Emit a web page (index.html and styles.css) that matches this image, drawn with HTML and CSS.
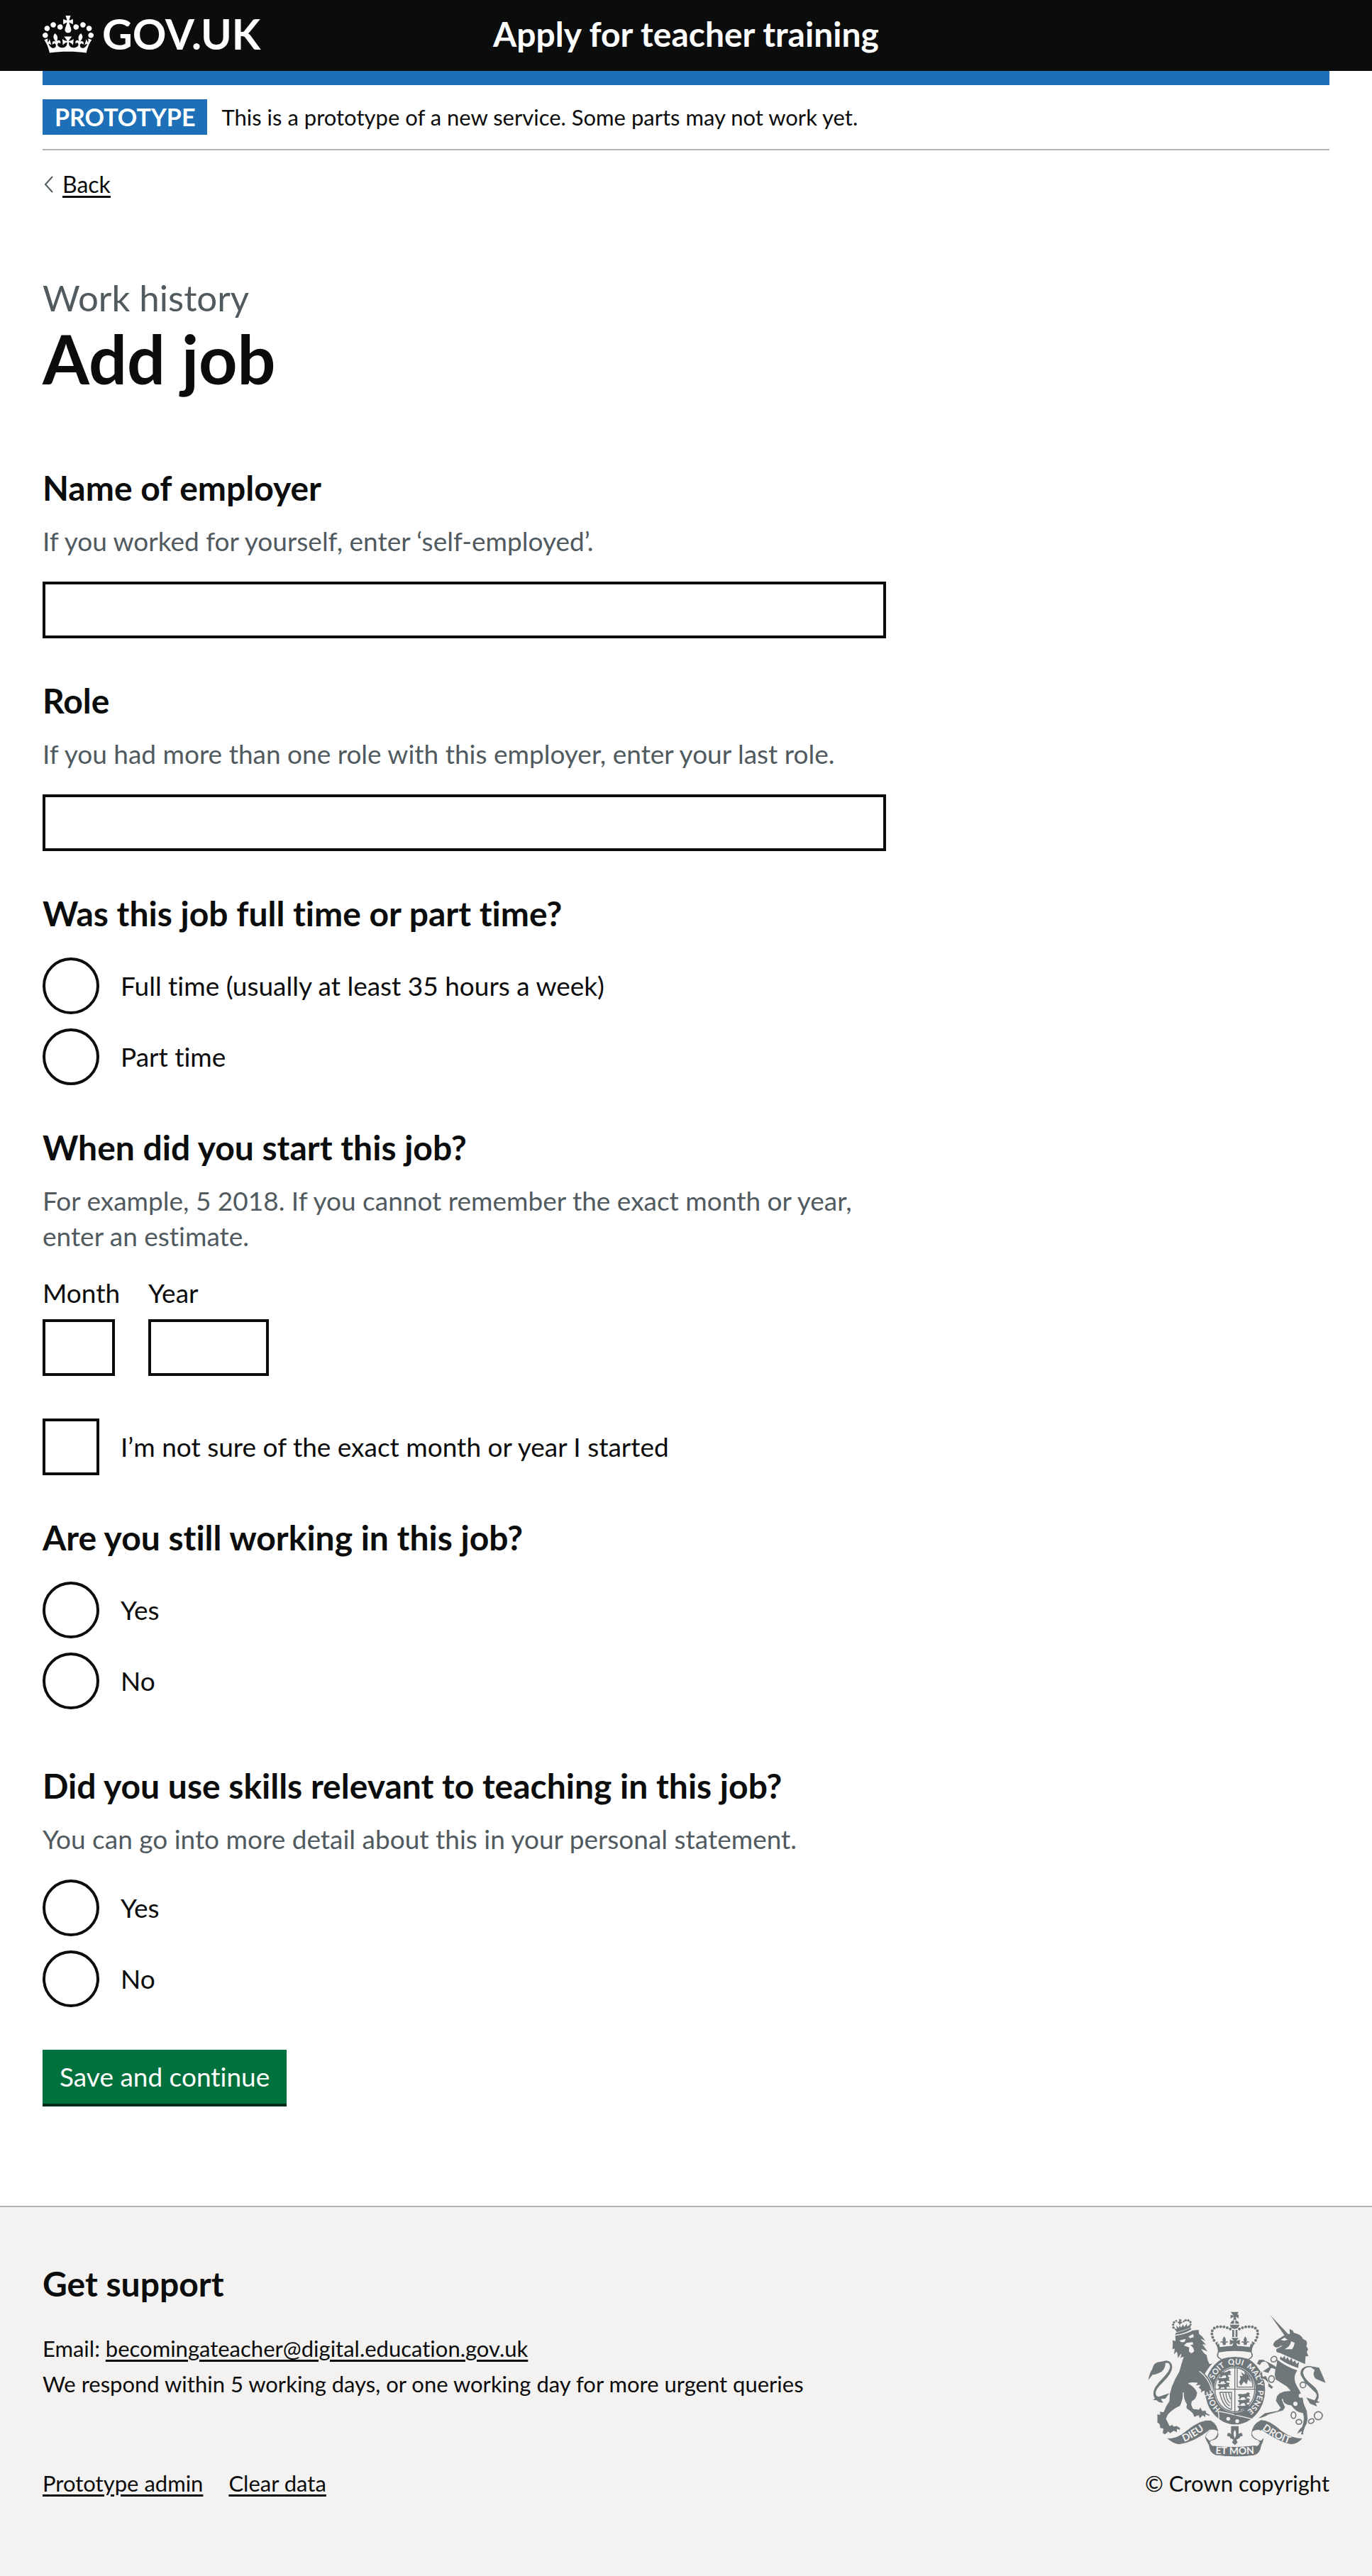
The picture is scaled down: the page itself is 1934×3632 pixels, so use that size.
FILE: index.html
```html
<!DOCTYPE html>
<html lang="en">
<head>
<meta charset="utf-8">
<meta name="viewport" content="width=device-width, initial-scale=1">
<title>Add job - Apply for teacher training - GOV.UK</title>
<link rel="stylesheet" href="styles.css">
</head>
<body>
<header class="header">
  <div class="header-inner container">
    <a class="logo" href="#">
      <svg class="logo-crown" viewBox="0 0 132 97" aria-hidden="true"><path fill="currentColor" d="M25 30.2c3.5 1.5 7.7-.2 9.1-3.7 1.5-3.6-.2-7.8-3.9-9.2-3.6-1.4-7.6.3-9.1 3.9-1.4 3.5.3 7.5 3.9 9zM9 39.5c3.6 1.5 7.8-.2 9.2-3.7 1.5-3.6-.2-7.8-3.9-9.1-3.6-1.5-7.6.2-9.1 3.8-1.4 3.5.3 7.5 3.8 9zM4.4 57.2c3.5 1.5 7.7-.2 9.1-3.8 1.5-3.6-.2-7.7-3.9-9.1-3.5-1.5-7.6.3-9.1 3.8-1.4 3.5.3 7.6 3.9 9.1zm38.3-21.4c3.5 1.5 7.7-.2 9.1-3.8 1.5-3.6-.2-7.7-3.9-9.1-3.6-1.5-7.6.3-9.1 3.8-1.3 3.6.4 7.7 3.9 9.1zm64.4-5.6c-3.6 1.5-7.8-.2-9.1-3.7-1.5-3.6.2-7.8 3.8-9.2 3.6-1.4 7.7.3 9.2 3.9 1.3 3.5-.4 7.5-3.9 9zm15.9 9.3c-3.6 1.5-7.7-.2-9.1-3.7-1.5-3.6.2-7.8 3.7-9.1 3.6-1.5 7.7.2 9.2 3.8 1.5 3.5-.3 7.5-3.8 9zm4.7 17.7c-3.6 1.5-7.8-.2-9.2-3.8-1.5-3.6.2-7.7 3.9-9.1 3.6-1.5 7.7.3 9.2 3.8 1.3 3.5-.4 7.6-3.9 9.1zM89.3 35.8c-3.6 1.5-7.8-.2-9.2-3.8-1.4-3.6.2-7.7 3.9-9.1 3.6-1.5 7.7.3 9.2 3.8 1.4 3.6-.3 7.7-3.9 9.1zM69.7 17.7l8.9 4.7V9.3l-8.9 2.8c-.2-.3-.5-.6-.9-.9L72.4 0H59.6l3.5 11.2c-.3.3-.6.5-.9.9l-8.8-2.8v13.1l8.8-4.7c.3.3.6.7.9.9l-5 15.4v.1c-.2.8-.4 1.6-.4 2.4 0 4.1 3.1 7.5 7 8.1h.2c.3 0 .7.1 1 .1.4 0 .7 0 1-.1h.2c4-.6 7.1-4.1 7.1-8.1 0-.8-.1-1.7-.4-2.4V34l-5.1-15.4c.4-.2.7-.6 1-.9zM66 92.8c16.9 0 32.8 1.1 47.1 3.2 4-16.9 8.9-26.7 14-33.5l-9.6-3.4c1 4.9 1.1 7.2 0 10.2-1.5-1.4-3-4.3-4.2-8.7L108.6 76c2.8-2 5-3.2 7.5-3.3-4.4 9.4-10 11.9-13.6 11.2-4.3-.8-6.3-4.6-5.6-7.9 1-4.7 5.7-5.9 8-.5 4.3-8.7-3-11.4-7.6-8.8 7.1-7.2 7.9-13.5 2.1-21.1-8 6.1-8.1 12.3-4.5 20.8-4.7-5.4-12.1-2.5-9.5 6.2 3.4-5.2 7.9-2 7.2 3.1-.6 4.3-6.4 7.8-13.5 7.2-10.3-.9-10.9-8-11.2-13.8 2.5-.5 7.1 1.8 11 7.3L80.2 60c-4.1 4.4-8 5.3-12.3 5.4 1.4-4.4 8-11.6 8-11.6H55.5s6.4 7.2 7.9 11.6c-4.2-.1-8-1-12.3-5.4l1.4 16.4c3.9-5.5 8.5-7.7 10.9-7.3-.3 5.8-.9 12.8-11.1 13.8-7.2.6-12.9-2.9-13.5-7.2-.7-5 3.8-8.3 7.1-3.1 2.7-8.7-4.6-11.6-9.4-6.2 3.7-8.5 3.6-14.7-4.6-20.8-5.8 7.6-5 13.9 2.2 21.1-4.7-2.6-11.9.1-7.7 8.8 2.3-5.5 7.1-4.2 8.1.5.7 3.3-1.3 7.1-5.7 7.9-3.5.7-9-1.8-13.5-11.2 2.5.1 4.7 1.3 7.5 3.3l-4.7-15.4c-1.2 4.4-2.7 7.2-4.3 8.7-1.1-3-.9-5.3 0-10.2l-9.5 3.4c5 6.9 9.9 16.7 14 33.5 14.8-2.1 30.8-3.2 47.7-3.2z"/></svg>
      <span class="logo-text">GOV.UK</span>
    </a>
    <a class="service-name" href="#">Apply for teacher training</a>
  </div>
</header>

<div class="container">
  <div class="phase-banner">
    <strong class="tag">PROTOTYPE</strong>
    <span>This is a prototype of a new service. Some parts may not work yet.</span>
  </div>
  <a class="back-link" href="#">
    <svg class="back-arrow" viewBox="0 0 16 24" aria-hidden="true"><path d="M14 1L4 12l10 11" fill="none" stroke="#505a5f" stroke-width="2"/></svg>
    <span class="back-text">Back</span>
  </a>

  <main class="main">
    <span class="caption">Work history</span>
    <h1 class="title">Add job</h1>

    <form class="form">
      <div class="group">
        <label class="label" for="employer">Name of employer</label>
        <div class="hint" id="employer-hint">If you worked for yourself, enter ‘self-employed’.</div>
        <input class="input" id="employer" type="text" aria-describedby="employer-hint">
      </div>

      <div class="group">
        <label class="label" for="role">Role</label>
        <div class="hint" id="role-hint">If you had more than one role with this employer, enter your last role.</div>
        <input class="input" id="role" type="text" aria-describedby="role-hint">
      </div>

      <fieldset class="group">
        <legend class="label label-plain">Was this job full time or part time?</legend>
        <div class="choices">
          <div class="choice"><input class="radio" id="full-time" name="hours" type="radio"><label for="full-time">Full time (usually at least 35 hours a week)</label></div>
          <div class="choice"><input class="radio" id="part-time" name="hours" type="radio"><label for="part-time">Part time</label></div>
        </div>
      </fieldset>

      <fieldset class="group" aria-describedby="start-hint">
        <legend class="label">When did you start this job?</legend>
        <div class="hint" id="start-hint">For example, 5 2018. If you cannot remember the exact month or year, enter an estimate.</div>
        <div class="date">
          <div class="date-item"><label class="date-label" for="start-month">Month</label><input class="input input-month" id="start-month" type="text" inputmode="numeric"></div>
          <div class="date-item"><label class="date-label" for="start-year">Year</label><input class="input input-year" id="start-year" type="text" inputmode="numeric"></div>
        </div>
      </fieldset>

      <div class="group">
        <div class="choice"><input class="checkbox" id="unsure" type="checkbox"><label for="unsure">I’m not sure of the exact month or year I started</label></div>
      </div>

      <fieldset class="group group-wide">
        <legend class="label label-plain">Are you still working in this job?</legend>
        <div class="choices">
          <div class="choice"><input class="radio" id="current-yes" name="current" type="radio"><label for="current-yes">Yes</label></div>
          <div class="choice"><input class="radio" id="current-no" name="current" type="radio"><label for="current-no">No</label></div>
        </div>
      </fieldset>

      <fieldset class="group" aria-describedby="skills-hint">
        <legend class="label">Did you use skills relevant to teaching in this job?</legend>
        <div class="hint" id="skills-hint">You can go into more detail about this in your personal statement.</div>
        <div class="choices">
          <div class="choice"><input class="radio" id="skills-yes" name="skills" type="radio"><label for="skills-yes">Yes</label></div>
          <div class="choice"><input class="radio" id="skills-no" name="skills" type="radio"><label for="skills-no">No</label></div>
        </div>
      </fieldset>

      <button class="button" type="submit">Save and continue</button>
    </form>
  </main>
</div>

<footer class="footer">
  <div class="container footer-inner">
    <div class="footer-main">
      <h2 class="footer-title">Get support</h2>
      <p class="footer-text">Email: <a href="#">becomingateacher@digital.education.gov.uk</a></p>
      <p class="footer-text">We respond within 5 working days, or one working day for more urgent queries</p>
      <ul class="footer-links">
        <li><a href="#">Prototype admin</a></li>
        <li><a href="#">Clear data</a></li>
      </ul>
    </div>
    <a class="copyright" href="#">
      <svg class="arms" viewBox="112 112 756 615" aria-hidden="true">
        <defs>
          <path id="garter" d="M420 524A97 106 0 1 1 532 532"/>
          <path id="ribbon-left" d="M250 669Q304 652 364 602"/>
          <path id="ribbon-right" d="M586 604Q646 652 720 674"/>
          <path id="ribbon-mid" d="M385 713Q480 720 575 713"/>
          <g id="passant"><path d="M0 6q10-6 20-2l14-2 8-6 10 4-4 8 6 8-8-2-8 2 2 8h-8l-4-8-12 2-4 6h-8l4-8z"/></g>
          <g id="fleur"><path d="M0-22C9-11 8-5 4 3C8-4 17-4 16 5C14 1 8 2 7 8L5 14H-5L-7 8C-8 2-14 1-16 5C-17-4-8-4-4 3C-8-5-9-11 0-22Z"/></g>
        </defs>
        <g fill="#6f777b">
          <!-- garter and shield -->
          <ellipse cx="481" cy="444" rx="127" ry="146"/>
          <path d="M408 534Q416 550 410 578M408 534L440 540L550 566" fill="none" stroke="#f3f2f1" stroke-width="4"/>
          <ellipse cx="480" cy="443" rx="88" ry="97" fill="#f3f2f1"/>
          <g fill="none" stroke="#6f777b" stroke-width="4"><ellipse cx="480" cy="443" rx="84" ry="93"/><path d="M480 340V548M392 441H568M490 350V432H556Q554 368 490 350M416 454H466V526Q430 520 416 454M430 458Q436 498 458 512M442 456Q444 488 460 500M453 456L462 484"/></g>
          <use href="#passant" x="412" y="366"/><use href="#passant" x="406" y="391"/><use href="#passant" x="406" y="416"/>
          <use href="#passant" x="492" y="458"/><use href="#passant" x="492" y="483"/><use href="#passant" x="490" y="508"/>
          <path d="M498 412L505 396L500 384L514 386L505 368L522 380L520 364L540 386L549 412L536 400L530 420L518 408L506 426Z"/>
          <path d="M470 541H506L482 552Z"/>
          <!-- main crown -->
          <path d="M408 288Q480 276 552 288Q548 304 536 312Q480 296 424 312Q412 304 408 288Z" fill="#f3f2f1"/>
          <path d="M462 114H496L490 125L496 126V142L484 134L486 147H473L476 134L462 142V126L475 130ZM461 164Q464 150 477 149V164ZM482 149Q496 152 498 164H482ZM459 168H499Q496 185 480 186Q462 185 459 168ZM469 190H477V220H469ZM483 190H491V220H483ZM465 224H496L486 237L501 231V253L486 246L492 262H467L474 246L459 253V231L475 237Z"/>
          <path d="M396 245L409 239L405 253L413 247L416 263Q480 252 543 263L548 246L554 253L551 238L566 245Q550 264 552 286Q480 272 408 286Q410 264 396 245Z"/>
          <g fill="none" stroke="#6f777b" stroke-width="12" stroke-linecap="round" stroke-dasharray="0 14"><path d="M392 234C356 164 436 170 463 188M568 234C604 164 524 170 497 188"/></g>
          <use href="#fleur" x="435" y="240"/><use href="#fleur" x="524" y="240"/>
          <path d="M410 286Q399 304 422 314M550 286Q561 304 538 314" fill="none" stroke="#6f777b" stroke-width="5"/>
          <!-- lion -->
          <path stroke="#f3f2f1" stroke-width="3" d="M215 232L228 236L226 214Q275 206 302 191L328 188L330 207Q344 214 358 239L338 230Q350 242 361 255L345 252L368 284L340 273Q350 290 362 296Q364 315 373 333L389 330Q376 340 354 376Q380 400 384 430L391 456L384 462L374 446L378 466L371 472L362 452L361 469L352 468L350 448L334 458Q342 436 324 438L333 424L312 426L322 415Q300 412 283 416Q312 431 322 456Q318 485 299 492Q293 507 304 523L328 526L334 515L343 532L356 530L362 543L373 546L374 556L356 549L358 562L344 553L331 566L326 552L308 560Q304 541 288 531Q268 524 276 505Q262 485 262 455Q264 480 249 512Q231 520 216 531Q194 546 190 566L205 596L214 590L222 598L234 595L250 605L249 615L236 610L237 625L222 618L206 629L199 621L185 633L174 628L176 608L164 607L160 588L151 583L151 545L163 548L162 534L178 537Q187 512 202 491Q200 462 212 431Q224 398 244 366Q252 336 262 305L248 311L252 293L239 312L234 283L221 297L224 270L214 275Q218 252 215 232Z"/>
          <path d="M330 365Q372 396 384 450" fill="none" stroke="#f3f2f1" stroke-width="4"/>
          <path d="M228 211Q270 205 296 188L294 181Q262 196 230 203ZM235 200L221 181L235 187L232 171L243 182L247 171L253 180L261 167L266 178L277 164L278 176L294 166L292 180Q264 192 235 200Z"/>
          <path d="M244 143L256 148L251 154L260 159L250 164L247 171L243 162L236 158L245 154Z"/>
          <g><circle cx="220" cy="180" r="5"/><circle cx="219" cy="168" r="5"/><circle cx="223" cy="158" r="5"/><circle cx="232" cy="152" r="4"/><circle cx="264" cy="154" r="4"/><circle cx="272" cy="149" r="5"/><circle cx="283" cy="150" r="5"/><circle cx="292" cy="157" r="5"/><circle cx="293" cy="168" r="4"/></g>
          <path d="M114 402Q119 372 130 357Q138 324 165 325L190 320Q214 322 215 348Q214 374 176 411Q144 441 145 458Q146 472 158 473L203 458L186 481L168 482Q170 492 178 497Q160 500 150 488L132 486Q148 482 137 471Q132 450 145 430Q157 412 178 391Q204 364 206 347Q206 326 186 330Q188 350 170 367Q148 379 132 380Z"/>
          <!-- unicorn -->
          <path d="M630 128L705 207L692 216Z"/>
          <path d="M642 253Q647 236 660 231L688 213Q701 206 713 207L711 187Q727 190 729 202Q761 209 768 228L782 236Q788 250 782 258L790 272L784 283L791 301L779 302L777 335L668 287Q651 286 656 271L681 258Q674 255 667 262Q649 269 642 253Z"/>
          <path stroke="#f3f2f1" stroke-width="3" d="M658 313Q697 345 746 360L737 377Q729 399 742 424Q770 468 772 500L786 534L789 567Q787 587 778 600L771 620L771 633L757 634L762 620L740 633Q751 608 763 600Q775 569 767 543Q737 540 719 511Q683 508 681 482Q680 489 694 517L684 532L622 549Q605 562 575 566L607 541L662 531L672 520L652 490Q655 446 714 447L700 431L651 400Q644 380 650 357L634 352L622 374L597 366L598 386L613 384L627 418L643 431L636 441L619 428L622 414L605 399L588 397L585 375Q592 366 604 360L624 347Q622 333 609 325L594 328L586 341L572 333L581 315L600 315L635 333Q646 339 654 345Z"/>
          <path d="M758 380Q754 346 793 342L836 350L847 374L864 414L822 397Q806 379 818 360L802 348Q773 344 768 371Q773 397 806 422Q839 447 834 478L828 490L840 497L821 499L828 514L798 502L782 476L816 488Q831 473 823 458L777 413Z"/>
          <!-- pendant -->
          <path d="M464 597H496V630Q514 618 512 640Q502 636 499 648L486 654L492 666L480 677L468 666L474 654L461 648Q458 636 448 640Q446 618 464 630Z"/>
          <path d="M480 612Q490 628 480 650Q470 628 480 612" fill="#f3f2f1"/>
          <!-- ribbon -->
          <path stroke="#f3f2f1" stroke-width="3" d="M190 646Q229 655 276 615Q338 565 378 572Q412 590 412 634Q409 656 378 660Q384 676 400 680Q480 688 562 678Q576 673 581 660Q548 651 548 629Q553 587 590 570Q626 569 676 615Q722 650 769 647Q746 675 716 675Q672 668 592 614Q583 622 601 633Q609 647 593 679Q588 715 560 722Q480 732 399 721Q373 712 369 679L354 649Q352 630 376 612Q308 667 245 675Q218 674 190 646Z"/>
          <path d="M379 612Q356 630 358 644L372 659Q407 650 408 620Q398 610 379 612ZM582 612Q550 614 552 629Q557 650 590 659L604 645Q603 625 582 612ZM374 662L402 679L387 681Q375 675 374 662ZM586 662L560 679L574 681Q585 675 586 662Z" fill="#f3f2f1"/>
          <!-- lion face, collar and chain -->
          <g fill="#f3f2f1"><path d="M245 235L273 228L266 242L254 242ZM284 218L304 207L306 221L290 225Z"/><path d="M264 256L276 245L302 242L304 252L292 254L304 266L308 280Q296 296 286 281L287 264L275 260Z"/><path d="M674 232L690 223L704 232L688 236ZM718 238L733 245Q731 262 722 272H690Q715 260 718 238Z"/><path d="M672 289L760 332L748 360Q697 345 664 318Z"/><circle cx="736" cy="503" r="9"/><circle cx="759" cy="468" r="9"/></g>
          <path d="M674 302L682 310L690 299L695 315L704 305L710 321L720 309L725 327L735 318L740 334L751 325L748 351Q700 336 670 313Z"/>
          <g fill="none" stroke="#6f777b" stroke-width="5"><ellipse cx="645" cy="314" rx="13" ry="11" transform="rotate(-35 645 314)"/><ellipse cx="635" cy="398" rx="12" ry="14"/><circle cx="768" cy="423" r="12"/><ellipse cx="728" cy="551" rx="10" ry="14"/><ellipse cx="751" cy="579" rx="12" ry="10"/><ellipse cx="803" cy="576" rx="12" ry="9" transform="rotate(-30 803 576)"/><circle cx="833" cy="553" r="17"/></g>
        </g>
        <g class="arms-text" fill="#f3f2f1">
          <text class="garter-text"><textPath href="#garter">HON&#160;&#160;&#160;&#160;&#160;&#160;&#160;SOIT&#160; QUI&#160; MAL Y&#160; PENSE</textPath></text>
          <text text-anchor="middle"><textPath href="#ribbon-left" startOffset="50%">DIEU</textPath></text>
          <text text-anchor="middle"><textPath href="#ribbon-mid" startOffset="50%">ET MON</textPath></text>
          <text text-anchor="middle"><textPath href="#ribbon-right" startOffset="50%">DROIT</textPath></text>
        </g>
        <g fill="#f3f2f1"><circle cx="452" cy="566" r="8"/><circle cx="490" cy="576" r="8"/></g>
      </svg>
      <span>© Crown copyright</span>
    </a>
  </div>
</footer>
</body>
</html>
```
FILE: styles.css
```css
* { box-sizing: border-box; }

body {
  margin: 0;
  font-family: Lato, "Liberation Sans", sans-serif;
  font-size: 37px;
  font-variant-ligatures: none;
  line-height: 50px;
  color: #0b0c0c;
  background: #f3f2f1;
}

.container { padding: 0 60px; }

body > .container { background: #fff; }

/* Header */
.header { background: #0b0c0c; }

.header-inner {
  display: grid;
  grid-template-columns: 35% 1fr;
  align-items: center;
  padding-top: 20px;
  padding-bottom: 24px;
}

.header a { color: #fff; text-decoration: none; }

.logo {
  display: flex;
  align-items: center;
  gap: 12px;
}

.logo-crown { width: 72px; height: 53px; }

.logo-text {
  font-size: 59px;
  font-weight: 700;
  line-height: 56px;
}

.service-name {
  font-size: 48px;
  font-weight: 700;
  line-height: 56px;
}

/* Phase banner */
.phase-banner {
  display: flex;
  align-items: center;
  gap: 20px;
  padding: 20px 0;
  border-top: 20px solid #1d70b8;
  border-bottom: 2px solid #b1b4b6;
  font-size: 31px;
  line-height: 50px;
}

.tag {
  padding: 0 17px;
  background: #1d70b8;
  color: #fff;
  font-size: 34px;
  font-weight: 700;
}

.back-link {
  display: inline-flex;
  align-items: center;
  gap: 12px;
  margin-top: 28px;
  color: #0b0c0c;
  font-size: 32px;
  line-height: 40px;
  text-decoration: none;
}

.back-text { text-decoration: underline; text-underline-offset: 4px; }

.back-arrow { width: 16px; height: 24px; }

/* Form */
.main {
  width: calc((100% + 60px) * 2 / 3 - 60px);
  padding: 107px 0 144px;
}

.caption {
  display: block;
  margin-bottom: 5px;
  color: #505a5f;
  font-size: 51px;
  line-height: 60px;
}

.title {
  margin: 0 0 105px;
  font-size: 95px;
  font-weight: 700;
  line-height: 100px;
}

.group {
  min-width: 0;
  margin: 0 0 60px;
  padding: 0;
  border: 0;
}

.group-wide { margin-bottom: 80px; }

.label {
  display: block;
  margin-bottom: 22px;
  padding: 0;
  font-size: 48px;
  font-weight: 700;
  line-height: 56px;
}

.label-plain { margin-bottom: 34px; }

.hint {
  margin-bottom: 32px;
  color: #505a5f;
}

.input {
  display: block;
  width: 100%;
  height: 80px;
  padding: 10px;
  border: 4px solid #0b0c0c;
  border-radius: 0;
  background: #fff;
  font: inherit;
}

.choices {
  display: flex;
  flex-direction: column;
  gap: 20px;
}

.choice {
  display: flex;
  align-items: center;
  gap: 30px;
}

.radio,
.checkbox {
  flex: none;
  width: 80px;
  height: 80px;
  margin: 0;
  border: 4px solid #0b0c0c;
  background: #fff;
  appearance: none;
}

.radio { border-radius: 50%; }

.radio:checked,
.checkbox:checked { box-shadow: inset 0 0 0 16px #fff; background: #0b0c0c; }

.date { display: flex; gap: 40px; }

.date-label {
  display: block;
  margin-bottom: 14px;
  line-height: 46px;
}

.input-month { width: 102px; }

.input-year { width: 170px; }

.button {
  display: block;
  padding: 13px 24px;
  border: 0;
  background: #00703c;
  box-shadow: 0 4px 0 #002d18;
  color: #fff;
  font: inherit;
  font-variant-ligatures: none;
}

/* Footer */
.footer {
  border-top: 2px solid #b1b4b6;
  background: #f3f2f1;
  font-size: 31px;
}

.footer a { color: #0b0c0c; text-underline-offset: 4px; }

.footer-inner {
  display: flex;
  justify-content: space-between;
  align-items: flex-end;
  gap: 60px;
  padding-top: 78px;
  padding-bottom: 107px;
}

.footer-title {
  margin: 0 0 36px;
  font-size: 48px;
  font-weight: 700;
  line-height: 60px;
}

.footer-text { margin: 0; }

.footer-links {
  display: flex;
  gap: 36px;
  margin: 90px 0 0;
  padding: 0;
  list-style: none;
}

.footer .copyright {
  display: flex;
  flex-direction: column;
  align-items: center;
  gap: 12px;
  text-decoration: none;
}

.arms { width: 252px; height: 205px; }

.arms-text { font-size: 42px; font-weight: 700; }

.garter-text { font-size: 33px; }
```
